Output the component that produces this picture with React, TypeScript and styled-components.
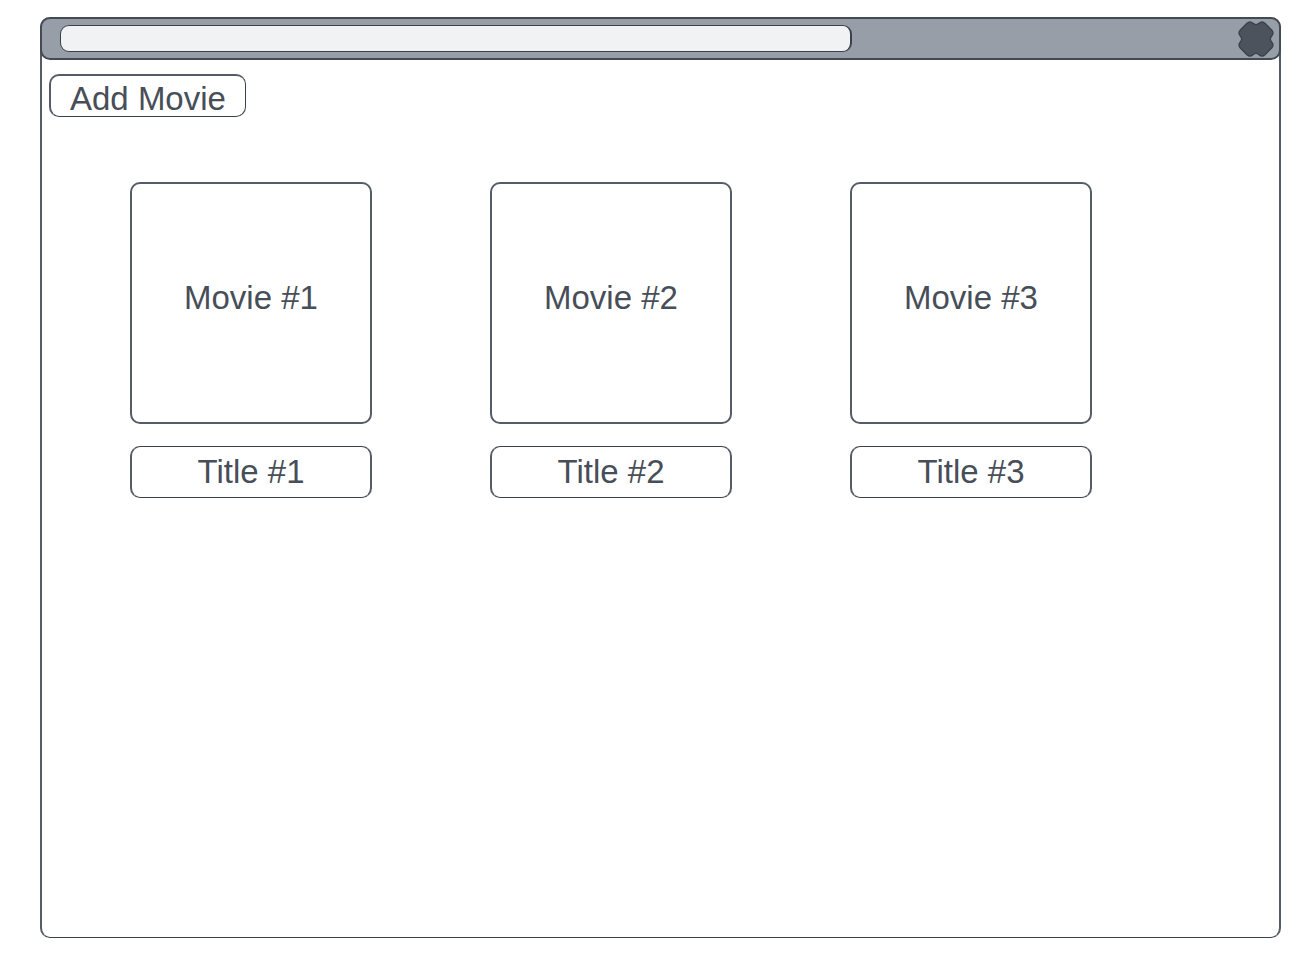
import React from "react";
import styled, { createGlobalStyle } from "styled-components";

const line = "#555c67";
const lineDark = "#3a414a";
const ink = "#474e58";

const GlobalStyle = createGlobalStyle`
  *, *::before, *::after { box-sizing: border-box; }
  body {
    margin: 0;
    background: #ffffff;
    color: ${ink};
    font-family: "Liberation Sans", Arial, sans-serif;
    font-size: 33px;
    line-height: 38px;
  }
`;

const Page = styled.div`
  display: flex;
  min-height: 100vh;
  padding: 17px 33px 18px 40px;
`;

const BrowserWindow = styled.div`
  flex: 1;
  min-width: 0;
  background: #ffffff;
  border-radius: 10px;
  border: 2px solid ${line};
  border-top: 0;
  border-bottom: 1px solid ${lineDark};
`;

const TitleBar = styled.header`
  display: flex;
  align-items: center;
  justify-content: space-between;
  height: 43px;
  margin: 0 -2px;
  padding: 0 5px 0 18px;
  background: #979ea8;
  border: 2px solid #434a54;
  border-radius: 10px;
`;

const AddressField = styled.input`
  flex: 0 1 792px;
  min-width: 0;
  height: 27px;
  padding: 0 10px;
  background: #f1f2f4;
  border: 1px solid ${lineDark};
  border-right-width: 2px;
  border-radius: 9px;
  color: ${ink};
  font: 16px "Liberation Sans", Arial, sans-serif;
`;

const CloseButton = styled.button`
  display: flex;
  flex: none;
  padding: 0;
  border: 0;
  background: none;
  cursor: pointer;
`;

const Content = styled.main`
  padding: 14px 7px;
`;

const AddButton = styled.button`
  display: block;
  height: 43px;
  padding: 4px 19px 0;
  border: 1px solid ${lineDark};
  border-top: 2px solid ${line};
  border-left: 2px solid ${line};
  border-radius: 10px;
  background: #ffffff;
  color: inherit;
  font: inherit;
  cursor: pointer;
`;

const MovieGrid = styled.ul`
  display: grid;
  grid-template-columns: repeat(auto-fill, 242px);
  gap: 40px 118px;
  margin: 65px 0 0;
  padding: 0 81px;
  list-style: none;
`;

const Movie = styled.li`
  display: grid;
  gap: 22px;
`;

const Box = styled.div`
  display: flex;
  align-items: center;
  justify-content: center;
  border: 2px solid ${line};
  border-radius: 10px;
`;

const Poster = styled(Box)`
  height: 242px;
  padding-bottom: 10px;
`;

const Title = styled(Box)`
  height: 52px;
  border-top: 1px solid ${lineDark};
  border-bottom: 1px solid ${lineDark};
`;

const movies = [1, 2, 3];

function CloseIcon() {
  return (
    <svg width="36" height="36" viewBox="0 0 108 108" aria-hidden="true">
      <path
        d="M27 7 Q36 -1 45 7 Q54 15 63 7 Q72 -1 81 7 L101 27 Q109 36 101 45 Q93 54 101 63 Q109 72 101 81 L81 101 Q72 109 63 101 Q54 93 45 101 Q36 109 27 101 L7 81 Q-1 72 7 63 Q15 54 7 45 Q-1 36 7 27 Z"
        fill="#4c535d"
        stroke={lineDark}
        strokeWidth="4"
        strokeLinejoin="round"
      />
    </svg>
  );
}

export default function App() {
  return (
    <>
      <GlobalStyle />
      <Page>
        <BrowserWindow>
          <TitleBar>
            <AddressField type="text" aria-label="Address" />
            <CloseButton type="button" aria-label="Close">
              <CloseIcon />
            </CloseButton>
          </TitleBar>
          <Content>
            <AddButton type="button">Add Movie</AddButton>
            <MovieGrid>
              {movies.map((n) => (
                <Movie key={n}>
                  <Poster>Movie #{n}</Poster>
                  <Title>Title #{n}</Title>
                </Movie>
              ))}
            </MovieGrid>
          </Content>
        </BrowserWindow>
      </Page>
    </>
  );
}
